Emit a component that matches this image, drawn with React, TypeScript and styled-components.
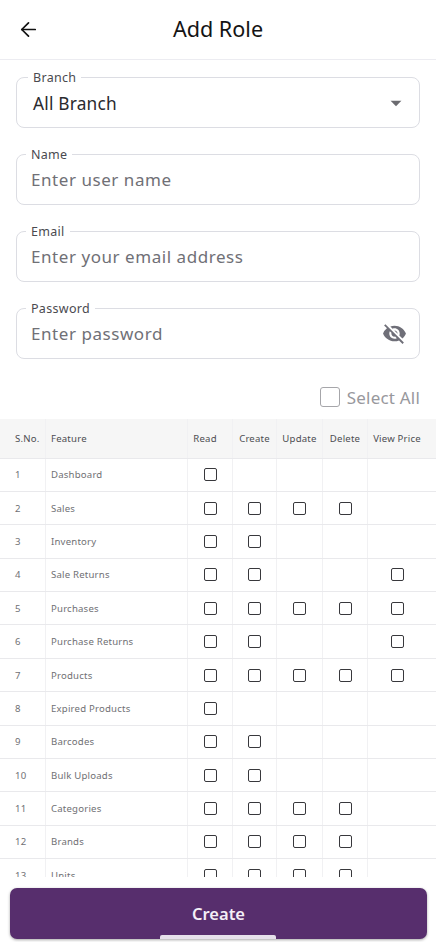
import styled, { createGlobalStyle } from "styled-components";
import { ArrowLeft } from "lucide-react";
import { MdArrowDropDown, MdVisibilityOff } from "react-icons/md";

const Global = createGlobalStyle`
    html, body {
        margin: 0;
        padding: 0;
        background: #fff;
    }
    * {
        box-sizing: border-box;
    }
`;

const Page = styled.div`
    width: 436px;
    height: 942px;
    display: flex;
    flex-direction: column;
    overflow: hidden;
    position: relative;
    background: #fff;
    font-family: "Noto Sans", sans-serif;
`;

const Header = styled.header`
    height: 60px;
    flex: none;
    display: grid;
    grid-template-columns: 56px 1fr 56px;
    align-items: center;
    border-bottom: 1px solid #ececf1;
    color: #111;
`;

const BackButton = styled.div`
    display: flex;
    padding-left: 17px;
`;

const Title = styled.h1`
    margin: 0 0 2px;
    text-align: center;
    font-size: 21.6px;
    font-weight: 400;
    color: #141414;
`;

const Form = styled.div`
    flex: none;
    display: flex;
    flex-direction: column;
    gap: 26px;
    padding: 17px 16px 0;
`;

const Field = styled.div`
    position: relative;
    height: 51px;
    display: flex;
    align-items: center;
    justify-content: space-between;
    padding: 0 12px 0 14px;
    border: 1px solid #dcdde3;
    border-radius: 8px;
`;

const Legend = styled.label<{ $left?: number }>`
    position: absolute;
    top: -8px;
    left: ${(p) => p.$left ?? 9}px;
    padding: 0 5px;
    background: #fff;
    font-size: 12.5px;
    line-height: 16px;
    letter-spacing: 0.3px;
    color: #4a4a4f;
`;

const Value = styled.span<{ $muted?: boolean }>`
    font-size: ${(p) => (p.$muted ? 17 : 17.3)}px;
    letter-spacing: ${(p) => (p.$muted ? 0.55 : 0.2)}px;
    color: ${(p) => (p.$muted ? "#707076" : "#2a2a2e")};
    padding-left: ${(p) => (p.$muted ? 0 : 2)}px;
    margin-top: ${(p) => (p.$muted ? 0 : 1)}px;
`;

const Caret = styled(MdArrowDropDown)`
    color: #6b6b70;
    margin-right: -2px;
`;

const SelectAll = styled.div`
    flex: none;
    display: flex;
    justify-content: flex-end;
    align-items: center;
    gap: 7px;
    height: 20px;
    margin: 28px 16px 12px 0;
    font-size: 17px;
    letter-spacing: 0.2px;
    color: #98989d;
`;

const BigBox = styled.span`
    width: 20px;
    height: 20px;
    border: 1px solid #a6a6aa;
    border-radius: 3px;
`;

const TableWrap = styled.div`
    flex: none;
    height: 458px;
    overflow: hidden;
`;

const Row = styled.div<{ $head?: boolean }>`
    display: grid;
    grid-template-columns: 46px 142px 45px 44px 46px 45px 58px;
    height: ${(p) => (p.$head ? 39.5 : 33.4)}px;
    background: ${(p) => (p.$head ? "#f6f6f6" : "#fff")};
    border-bottom: 1px solid #e9e9ec;
`;

const Cell = styled.div<{ $center?: boolean; $head?: boolean; $first?: boolean; $last?: boolean; $pull?: boolean }>`
    display: flex;
    align-items: center;
    justify-content: ${(p) => (p.$center ? "center" : "flex-start")};
    padding-left: ${(p) => (p.$center ? 0 : p.$first ? 15 : 5)}px;
    padding-right: ${(p) => (p.$pull ? 10 : 0)}px;
    border-right: ${(p) => (p.$last ? "none" : "1px solid #f1f1f3")};
    font-size: 9.6px;
    letter-spacing: 0.2px;
    white-space: nowrap;
    color: ${(p) => (p.$head ? "#4d4d52" : "#707074")};
`;

const Box = styled.span`
    width: 13px;
    height: 13px;
    border: 1.4px solid #38383c;
    border-radius: 2px;
`;

const Footer = styled.div`
    flex: 1;
    padding: 11px 9px 0 10px;
`;

const CreateButton = styled.button`
    width: 100%;
    height: 51px;
    border: none;
    border-radius: 7px;
    background: #572e6d;
    box-shadow: 0 1px 3px rgba(0, 0, 0, 0.35);
    color: #f4eff7;
    font-family: inherit;
    font-size: 16.5px;
    font-weight: 600;
`;

const HomeBar = styled.div`
    position: absolute;
    left: 160px;
    bottom: 3px;
    width: 116px;
    height: 4px;
    border-radius: 2px 2px 0 0;
    background: #e6e0ea;
`;

const EyeOff = styled(MdVisibilityOff)`
    color: #6f6f78;
`;

const columns = ["Read", "Create", "Update", "Delete", "View Price"];

// R C U D V flags per feature
const features: [string, string][] = [
    ["Dashboard", "10000"],
    ["Sales", "11110"],
    ["Inventory", "11000"],
    ["Sale Returns", "11001"],
    ["Purchases", "11111"],
    ["Purchase Returns", "11001"],
    ["Products", "11111"],
    ["Expired Products", "10000"],
    ["Barcodes", "11000"],
    ["Bulk Uploads", "11000"],
    ["Categories", "11110"],
    ["Brands", "11110"],
    ["Units", "11110"],
];

export default function App() {
    return (
        <Page>
            <Global />
            <Header>
                <BackButton>
                    <ArrowLeft size={23} strokeWidth={1.8} />
                </BackButton>
                <Title>Add Role</Title>
            </Header>

            <Form>
                <Field>
                    <Legend $left={11}>Branch</Legend>
                    <Value>All Branch</Value>
                    <Caret size={26} />
                </Field>
                <Field>
                    <Legend>Name</Legend>
                    <Value $muted>Enter user name</Value>
                </Field>
                <Field>
                    <Legend>Email</Legend>
                    <Value $muted>Enter your email address</Value>
                </Field>
                <Field>
                    <Legend>Password</Legend>
                    <Value $muted>Enter password</Value>
                    <EyeOff size={25} />
                </Field>
            </Form>

            <SelectAll>
                <BigBox />
                Select All
            </SelectAll>

            <TableWrap>
                <Row $head>
                    <Cell $head $first>S.No.</Cell>
                    <Cell $head>Feature</Cell>
                    {columns.map((c, j) => (
                        <Cell $head $center $last={j === 4} $pull={c === "Read"} key={c}>{c}</Cell>
                    ))}
                </Row>
                {features.map(([name, flags], i) => (
                    <Row key={name}>
                        <Cell $first>{i + 1}</Cell>
                        <Cell>{name}</Cell>
                        {flags.split("").map((f, j) => (
                            <Cell $center $last={j === 4} key={j}>{f === "1" && <Box />}</Cell>
                        ))}
                    </Row>
                ))}
            </TableWrap>

            <Footer>
                <CreateButton>Create</CreateButton>
            </Footer>
            <HomeBar />
        </Page>
    );
}
